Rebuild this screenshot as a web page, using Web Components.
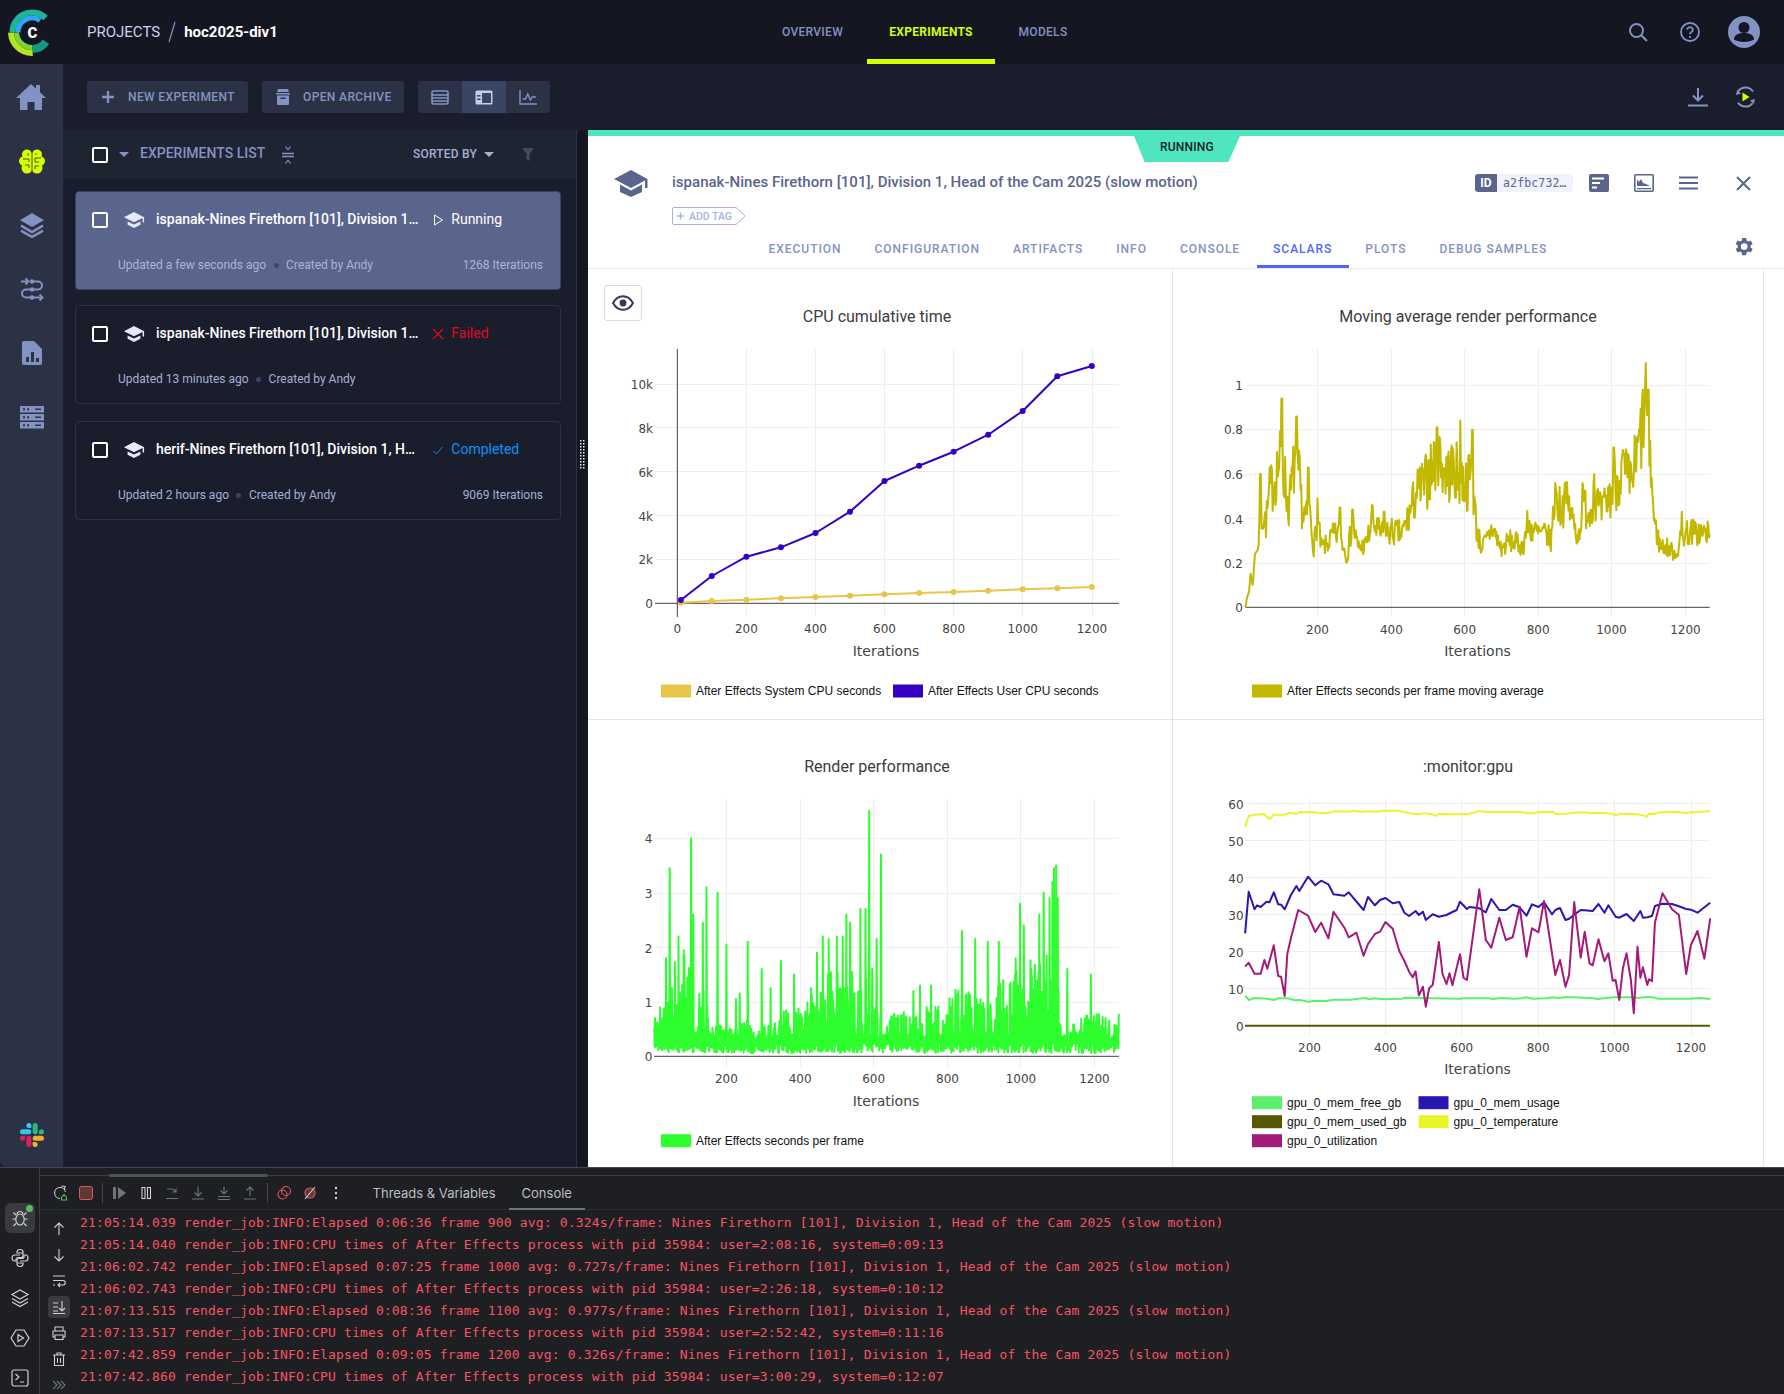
<!DOCTYPE html>
<html lang="en"><head><meta charset="utf-8"><title>Experiments</title>
<style>
html,body{margin:0;padding:0;background:#1e1f22;}
body{width:1784px;height:1394px;overflow:hidden;display:flex;flex-direction:column;font-family:Roboto,"Liberation Sans",sans-serif;}
</style></head><body>
<app-shell></app-shell>
<debug-console></debug-console>
<script>
const BLUE='#8492c2';
const def=(name,render)=>customElements.define(name,class extends HTMLElement{connectedCallback(){if(!this.shadowRoot){this.attachShadow({mode:'open'}).innerHTML=render(this);}}});
const svg=(w,h,vb,body,extra='')=>`<svg width="${w}" height="${h}" viewBox="${vb}" ${extra} style="display:block;flex:none">${body}</svg>`;
const capPath='M12 2.5 1 8.6l11 6 9.4-5.1V15H23V8.6zM5 13.7v3.9l7 3.9 7-3.9v-3.9l-7 3.8z';
const ICON={
 home:svg(30,26,'0 0 30 26',`<path fill="${BLUE}" d="M15 0 20 4.6V1h4v7.2l6 5.8h-4v12h-7.5v-8h-7v8H4V14H0z"/>`),
 brain:svg(26,25,'0 0 26 25',`<g fill="#d6ff00"><circle cx="8" cy="5.5" r="5"/><circle cx="18" cy="5.5" r="5"/><circle cx="4.5" cy="12" r="4.5"/><circle cx="21.5" cy="12" r="4.5"/><circle cx="8" cy="19" r="5.5"/><circle cx="18" cy="19" r="5.5"/><circle cx="13" cy="12" r="8"/></g><g fill="none" stroke="#39402a" stroke-width=".9"><path d="M13 2v21M4 10h6v3M22 9h-6v4h4M6 16h4v3M20 17h-4v3M9 4v3M17 4v2"/></g>`),
 layers:svg(24,25,'0 0 24 25',`<path fill="${BLUE}" d="M12 0 24 7.2 12 14 0 7.2z"/><path fill="none" stroke="${BLUE}" stroke-width="2.4" d="M1 12.6 12 19l11-6.4M1 17.6 12 24l11-6.4"/>`),
 pipeline:svg(24,25,'0 0 24 25',`<g fill="none" stroke="${BLUE}" stroke-width="1.9"><path d="M12 4.500h6a4 4 0 0 1 0 8H6a4 4 0 0 0 0 8h16.500"/><path d="M1 4.500h7M5.500 1.500l3 3-3 3M19.500 17.500l3 3-3 3"/></g><g fill="${BLUE}"><circle cx="12" cy="4.500" r="2.300"/><circle cx="12" cy="12.500" r="2.300"/><circle cx="12" cy="20.500" r="2.300"/></g>`),
 report:svg(20,24,'0 0 20 24',`<path fill="${BLUE}" d="M2 0h10l8 8v14a2 2 0 0 1-2 2H2a2 2 0 0 1-2-2V2a2 2 0 0 1 2-2z"/><path fill="#2c3246" d="M4 16h3v5H4zM9 11h3v10H9zM14 17h3v4h-3z"/>`),
 workers:svg(24,24,'0 0 24 24',`<path fill="${BLUE}" d="M0 1h24v6.500H0zM0 9h24v6.500H0zM0 17h24v6.500H0z"/><path fill="#2c3246" d="M3 3.300h2v2H3zM7 3.300h2v2H7zM15 3.500h6v1.600h-6zM3 11.300h2v2H3zM7 11.300h2v2H7zM15 11.500h6v1.600h-6zM3 19.300h2v2H3zM7 19.300h2v2H7zM15 19.500h6v1.600h-6z"/>`),
 slack:svg(24,24,'0 0 24 24',`<path fill="#E01E5A" d="M5.042 15.165a2.528 2.528 0 0 1-2.52 2.523A2.528 2.528 0 0 1 0 15.165a2.527 2.527 0 0 1 2.522-2.52h2.52v2.52zM6.313 15.165a2.527 2.527 0 0 1 2.521-2.52 2.527 2.527 0 0 1 2.521 2.52v6.313A2.528 2.528 0 0 1 8.834 24a2.528 2.528 0 0 1-2.521-2.522v-6.313z"/><path fill="#36C5F0" d="M8.834 5.042a2.528 2.528 0 0 1-2.521-2.52A2.528 2.528 0 0 1 8.834 0a2.528 2.528 0 0 1 2.521 2.522v2.52H8.834zM8.834 6.313a2.528 2.528 0 0 1 2.521 2.521 2.528 2.528 0 0 1-2.521 2.521H2.522A2.528 2.528 0 0 1 0 8.834a2.528 2.528 0 0 1 2.522-2.521h6.312z"/><path fill="#2EB67D" d="M18.956 8.834a2.528 2.528 0 0 1 2.522-2.521A2.528 2.528 0 0 1 24 8.834a2.528 2.528 0 0 1-2.522 2.521h-2.522V8.834zM17.688 8.834a2.528 2.528 0 0 1-2.523 2.521 2.527 2.527 0 0 1-2.52-2.521V2.522A2.527 2.527 0 0 1 15.165 0a2.528 2.528 0 0 1 2.523 2.522v6.312z"/><path fill="#ECB22E" d="M15.165 18.956a2.528 2.528 0 0 1 2.523 2.522A2.528 2.528 0 0 1 15.165 24a2.527 2.527 0 0 1-2.52-2.522v-2.522h2.52zM15.165 17.688a2.527 2.527 0 0 1-2.52-2.523 2.526 2.526 0 0 1 2.52-2.52h6.313A2.527 2.527 0 0 1 24 15.165a2.528 2.528 0 0 1-2.522 2.523h-6.313z"/>`),
 cap:(c,w=22,h=20)=>svg(w,h,'0 0 24 24',`<path fill="${c}" d="${capPath}"/>`,'preserveAspectRatio="none"'),
 caret:(c,w=10)=>svg(w,5,'0 0 10 5',`<path fill="${c}" d="M0 0h10L5 5z"/>`)
};
const pol=(cx,cy,r,a)=>[cx+r*Math.cos(a*Math.PI/180),cy+r*Math.sin(a*Math.PI/180)];
const arc=(r,a0,a1,col,w)=>{const [x0,y0]=pol(32,32,r,a0),[x1,y1]=pol(32,32,r,a1);return `<path fill="none" stroke="${col}" stroke-width="${w}" d="M${x0} ${y0}A${r} ${r} 0 ${Math.abs(a1-a0)>180?1:0} 1 ${x1} ${y1}"/>`;};

def('app-logo',()=>`<style>:host{display:block;width:63px;height:64px;flex:none}svg{display:block}text{font:900 15px Roboto,sans-serif;fill:#fff}</style>
<svg width="63" height="64" viewBox="0 0 63 64">${arc(19.5,178,314,'#1db598',6)}${arc(14,178,305,'#34a5f2',5)}${arc(21,88,178,'#b5e61d',6)}${arc(15.5,88,178,'#7fd33a',5)}${arc(17,35,88,'#139a82',8)}<text x="32.500" y="37.500" text-anchor="middle">C</text></svg>`);

def('top-bar',()=>`<style>
:host{display:flex;height:64px;background:#141722;align-items:stretch;flex:none}
.crumb{width:695px;box-sizing:border-box;padding-left:24px;display:flex;align-items:center;font-size:15px;color:#c9d2ef}
b{font-weight:700;color:#fff;font-size:15px}
svg.sl{margin:0 7px 0 7px}
nav{display:flex;width:334px}
a{display:flex;align-items:center;justify-content:center;box-sizing:border-box;height:64px;font-size:12px;font-weight:500;letter-spacing:.3px;color:${BLUE};border-bottom:5px solid transparent;padding-top:5px}
a.on{color:#d4ff00;font-weight:700;border-bottom-color:#d4ff00;width:128px}
.ic{margin-left:auto;display:flex;align-items:center;padding-right:24px}
</style><app-logo></app-logo>
<div class="crumb">PROJECTS<svg class="sl" width="10" height="24" viewBox="0 0 10 24"><path d="M8 2 2 22" stroke="#8492c2" stroke-width="1.200"/></svg><b>hoc2025-div1</b></div>
<nav><a style="width:109px">OVERVIEW</a><a class="on">EXPERIMENTS</a><a style="width:96px">MODELS</a></nav>
<div class="ic">
${svg(20,20,'0 0 20 20',`<circle cx="8.500" cy="8.500" r="6.500" fill="none" stroke="${BLUE}" stroke-width="2"/><path d="m13.500 13.500 5.500 5.500" stroke="${BLUE}" stroke-width="2.200"/>`,'style="margin-right:32px"')}
${svg(20,20,'0 0 20 20',`<circle cx="10" cy="10" r="9" fill="none" stroke="${BLUE}" stroke-width="1.800"/><path d="M7.200 7.700a2.800 2.600 0 1 1 4.300 2.300c-1 .7-1.500 1.100-1.500 2.300" fill="none" stroke="${BLUE}" stroke-width="1.800"/><circle cx="10" cy="15" r="1.100" fill="${BLUE}"/>`,'style="margin-right:28px"')}
${svg(32,32,'0 0 32 32',`<circle cx="16" cy="16" r="16" fill="${BLUE}"/><circle cx="16" cy="11.500" r="5.500" fill="#141722"/><path d="M6 23.500c0-5 5-6.500 10-6.500s10 1.500 10 6.500c-2.500 1.500-6 2.500-10 2.500s-7.500-1-10-2.500z" fill="#141722"/>`)}
</div>`);

def('side-nav',()=>`<style>
:host{display:flex;flex-direction:column;width:63px;flex:none;background:#2c3246;padding:1px 0 20px;box-sizing:border-box}
div{height:64px;display:flex;align-items:center;justify-content:center;flex:none}
div.s{margin-top:auto;height:24px}
</style>
<div style="padding-right:2px">${ICON.home}</div><div>${ICON.brain}</div><div>${ICON.layers}</div><div>${ICON.pipeline}</div><div>${ICON.report}</div><div>${ICON.workers}</div><div class="s">${ICON.slack}</div>`);

def('tool-bar',()=>`<style>
:host{display:flex;height:66px;flex:none;box-sizing:border-box;padding:17px 0 0 24px;background:#1a1e2c}
.b{display:flex;align-items:center;height:32px;background:#2c3246;border-radius:3px;margin-right:14px;color:${BLUE};font-size:12px;font-weight:500;letter-spacing:.38px;box-sizing:border-box;white-space:nowrap}
.t{display:flex;height:32px;border-radius:3px;overflow:hidden;background:#2c3246}
.t span{width:44px;display:flex;align-items:center;justify-content:center}
.t span.on{background:#3a4566}
.r{margin-left:auto;display:flex;height:32px;align-items:center;padding-right:28px}
</style>
<div class="b" style="width:161px;padding-left:15px">${svg(12,12,'0 0 12 12',`<path d="M6 0v12M0 6h12" stroke="${BLUE}" stroke-width="2.400"/>`,'style="margin-right:14px"')}NEW EXPERIMENT</div>
<div class="b" style="width:142px;padding-left:14px">${svg(14,16,'0 0 14 16',`<path fill="${BLUE}" d="M2 0h10l1 3H1zM0 4h14v1.500H0zM1 6.500h12V15a1 1 0 0 1-1 1H2a1 1 0 0 1-1-1z"/><path fill="#2c3246" d="M4.500 8.500h5v1.500h-5z"/>`,'style="margin-right:13px"')}OPEN ARCHIVE</div>
<div class="t">
<span>${svg(18,15,'0 0 18 15',`<rect x="1" y="1" width="16" height="13" rx="1.500" fill="none" stroke="${BLUE}" stroke-width="1.600"/><path d="M1 5h16M1 8h16M1 11h16" stroke="${BLUE}" stroke-width="1.400"/>`)}</span>
<span class="on">${svg(18,15,'0 0 18 15',`<rect x=".5" y=".5" width="17" height="14" rx="1.500" fill="#c4cdea"/><rect x="7" y="3" width="9" height="10" fill="#3a4566"/><path d="M2 5h3.500v1.500H2zM2 8.500h3.500V10H2z" fill="#3a4566"/>`)}</span>
<span>${svg(18,15,'0 0 18 15',`<path d="M1 0v14h17M3.500 9h3l2.300-5 2.500 6 1.800-3H17" fill="none" stroke="${BLUE}" stroke-width="1.400"/>`)}</span>
</div>
<div class="r">
${svg(20,20,'0 0 20 20',`<path d="M10 1v12M5 8.500l5 5 5-5M0 18.500h20" fill="none" stroke="${BLUE}" stroke-width="2"/>`,'style="margin-right:27px"')}
${svg(21,22,'0 0 21 22',`<path d="M18 5.500A9 9 0 0 0 3.500 4.700M3 16.500a9 9 0 0 0 14.500.800" fill="none" stroke="${BLUE}" stroke-width="2"/><path d="M2.200 3.800 1 9l5-1.500zM18.800 18 20 13l-5 1.500z" fill="${BLUE}"/><path d="M7.500 6.500v9l7-4.500z" fill="#d4ff00"/>`)}
</div>`);

def('check-box',()=>`<style>:host{display:block;width:16px;height:16px;box-sizing:border-box;border:2px solid #fff;border-radius:2px;flex:none}</style>`);

def('exp-card',h=>{
 const st=h.getAttribute('status');
 const ic={Running:svg(14,14,'0 0 14 14','<path d="M3.500 2v10L11.500 7z" fill="none" stroke="#fff" stroke-width="1"/>'),
  Failed:svg(14,14,'0 0 14 14','<path d="M2 2l10 10M12 2 2 12" stroke="#e00a1f" stroke-width="1.200"/>'),
  Completed:svg(14,14,'0 0 14 14','<path d="M2.500 8 5.500 11l6-7" fill="none" stroke="#0a84e8" stroke-width="1"/>')}[st];
 const col={Running:'#fff',Failed:'#e00a1f',Completed:'#0a91ff'}[st];
 return `<style>
:host{display:block;height:99px;box-sizing:border-box;border:1px solid #2c3246;border-radius:4px;padding:20px 17px 0 16px;color:#fff;flex:none}
:host([on]){background:#5a658e;border-color:#3a4261}
.r1{display:flex;align-items:center;height:16px}
.cap{margin-left:15px}
.t{margin-left:11px;width:266px;white-space:nowrap;font-size:14px;font-weight:500;color:#fff;transform:translateY(-1px)}
.s{margin-left:9px}
.st{margin-left:6.300px;font-size:14px;color:${col};transform:translateY(-1px)}
.r2{display:flex;align-items:center;margin:29px 0 0 26px;font-size:12px;color:#a4afd6;height:16px}
:host([on]) .r2{color:#aab4d8}
i{width:5px;height:5px;border-radius:50%;background:#3b4463;margin:0 7.500px}
.it{margin-left:auto;padding-right:0}
</style>
<div class="r1"><check-box></check-box><span class="cap">${ICON.cap('#e6e9f6')}</span><div class="t">${h.getAttribute('name')}</div><span class="s">${ic}</span><span class="st">${st}</span></div>
<div class="r2"><span>${h.getAttribute('updated')}</span><i></i><span>Created by Andy</span><span class="it">${h.getAttribute('iters')||''}</span></div>`;});

def('exp-list',()=>`<style>
:host{display:flex;flex-direction:column;width:514px;flex:none;background:#1a1e2c;box-sizing:border-box;border-right:1px solid #2c3246}
header{height:49px;display:flex;align-items:center;background:#1f2433;padding-left:29px;color:${BLUE};flex:none}
.c{margin-left:11px}
.h{margin-left:11px;font-size:14px;font-weight:500;width:125px;white-space:nowrap;transform:translateY(-2px)}
.ci{margin-left:16px}
.so{margin-left:118px;font-size:12px;font-weight:500;color:#a4afd6;letter-spacing:.2px;white-space:nowrap;transform:translateY(-1px)}
main{display:flex;flex-direction:column;gap:16px;padding:12px 15px 0 12px}
</style>
<header><check-box></check-box><span class="c">${ICON.caret(BLUE)}</span><span class="h">EXPERIMENTS LIST</span>
<span class="ci">${svg(14,20,'0 0 14 20',`<path d="M1 8.500h12M1 11.500h12" stroke="${BLUE}" stroke-width="1.400"/><path d="M7 5 4.500 1.500M7 5l2.500-3.500M7 15l-2.500 3.500M7 15l2.500 3.500" stroke="${BLUE}" stroke-width="1.200" fill="none"/>`)}</span>
<span class="so">SORTED BY</span><span style="margin-left:7px">${ICON.caret('#a4afd6')}</span>
<span style="margin-left:28px">${svg(12,13,'0 0 12 13','<path d="M0 0h12L7.500 6v7l-3-2V6z" fill="#434a63"/>')}</span></header>
<main>
<exp-card on name="ispanak-Nines Firethorn [101], Division 1…" status="Running" updated="Updated a few seconds ago" iters="1268 Iterations"></exp-card>
<exp-card style="margin-top:-1px" name="ispanak-Nines Firethorn [101], Division 1…" status="Failed" updated="Updated 13 minutes ago"></exp-card>
<exp-card style="margin-top:1px" name="herif-Nines Firethorn [101], Division 1, H…" status="Completed" updated="Updated 2 hours ago" iters="9069 Iterations"></exp-card>
</main>`);

def('pane-gutter',()=>`<style>:host{display:flex;width:11px;flex:none;background:#141722;align-items:center;justify-content:center;padding-bottom:0}</style>
${svg(6,30,'0 0 6 30',`<g fill="#e8eaf2">${[...Array(10)].map((_,i)=>`<rect x="0" y="${i*3}" width="1.500" height="1.500"/><rect x="3" y="${i*3}" width="1.500" height="1.500"/>`).join('')}</g>`,'style="margin-bottom:388px"')}`);

/* ---------- chart data ---------- */
function rng(a){return ()=>{a|=0;a=a+0x6D2B79F5|0;let t=Math.imul(a^a>>>15,1|a);t=t+Math.imul(t^t>>>7,61|t)^t;return((t^t>>>14)>>>0)/4294967296;};}
const lerp=(tb,x)=>{for(let i=1;i<tb.length;i++){if(x<=tb[i][0]){const [a,b]=tb[i-1],[c,d]=tb[i];return b+(d-b)*(x-a)/(c-a||1);}}return tb[tb.length-1][1];};
const zpts=(arr,ox,oy,sx)=>arr.map(([x,y])=>[+(ox+x/sx).toFixed(1),+(oy+y/3).toFixed(1)]);
const str=p=>p.map(a=>a.join(',')).join(' ');

const c1user=zpts([[250,810],[335,738],[430,680],[525,652],[620,609],[715,545],[810,453],[905,407],[1000,365],[1095,314],[1190,243],[1285,139],[1380,108]],590,330,2.75);
const c1sys=zpts([[250,818],[335,813],[430,809],[525,805],[620,801],[715,797],[810,793],[905,789],[1000,786],[1095,782],[1190,778],[1285,775],[1380,771]],590,330,2.75);

const envA=[[4,0],[8,.04],[14,.07],[18,.15],[24,.1],[30,.24],[38,.26],[44,.38],[50,.42],[60,.38],[70,.52],[80,.56],[90,.62],[100,.66],[110,.6],[120,.44],[128,.52],[138,.66],[150,.58],[160,.42],[170,.4],[178,.44],[190,.27],[200,.4],[210,.27],[225,.28],[240,.32],[260,.33],[280,.23],[295,.38],[310,.27],[330,.28],[350,.38],[370,.33],[400,.34],[430,.33],[450,.42],[470,.52],[490,.55],[510,.62],[525,.7],[550,.6],[570,.62],[590,.58],[605,.55],[620,.6],[632,.36],[645,.27],[660,.3],[675,.36],[700,.26],[720,.3],[740,.29],[758,.27],[770,.37],[800,.33],[820,.33],[835,.3],[845,.5],[860,.45],[880,.47],[900,.36],[910,.32],[920,.47],[940,.43],[950,.52],[970,.42],[990,.48],[1010,.56],[1030,.62],[1050,.55],[1060,.62],[1072,.7],[1085,.85],[1092,.95],[1100,.85],[1106,.62],[1115,.38],[1130,.28],[1150,.27],[1175,.24],[1190,.32],[1205,.34],[1266,.33]];
const peaksA={103:.94,143:.86,175:.63,200:.49,261:.45,295:.44,349:.46,381:.43,525:.81,588:.84,621:.8,846:.56,872:.56,952:.6,1005:.72,1092:1.1,1190:.43,45:.6};
const X2=i=>1317.5+(i-200)*.368,Y2=v=>607.3-222*v;
let rA=rng(7),ptsA=[];
for(let i=4;i<=1266;i+=2){let e=lerp(envA,i),amp=.04+.3*Math.max(0,e-.26),v=e+(rA()*2-1)*amp;if(i<40)v=e;v=Math.min(v,.98);
 for(const k in peaksA){if(Math.abs(k-i)<=1){v=peaksA[k];}}
 ptsA.push([+X2(i).toFixed(1),+Y2(v).toFixed(1)]);}

const ampB=[[4,.5],[30,.6],[60,1.5],[100,1.6],[115,.25],[130,1.1],[150,1.1],[160,.3],[200,.3],[260,.4],[280,.15],[330,.5],[400,.7],[450,1],[500,1.4],[600,1.4],[630,.15],[650,.6],[700,.5],[800,.8],[830,1],[900,.8],[1000,1.4],[1100,1.6],[1110,.2],[1180,.5],[1266,.6]];
const peaksB=[[103,4],[45,3.45],[145,3.1],[175,3],[110,2.6],[135,2.45],[35,1.8],[70,2.2],[83,1.95],[200,2.05],[258,2.1],[296,1.6],[348,1.75],[320,1.25],[383,1.5],[430,1.25],[445,1.9],[462,2.2],[478,2.15],[500,2.2],[515,2.2],[525,2.6],[535,2.45],[563,2.7],[578,2.7],[588,4.5],[620,3.7],[607,2.15],[708,1.2],[725,1.3],[755,1.3],[840,2.3],[875,2.15],[910,2.1],[940,2.1],[985,1.8],[998,2.8],[1008,2.4],[1050,2.6],[1062,3],[1078,2.9],[1085,3.2],[1090,3.45],[1095,3.5],[1100,2.9],[1125,1.6],[1190,1.5],[225,1.05],[235,1.15],[20,.9],[30,.87]];
const X3=i=>726.4+(i-200)*.3681,Y3=v=>1056.3-54.5*v;
let rB=rng(11),ptsB=[],pm=new Map(peaksB.map(([a,b])=>[Math.round(a/2)*2,b]));
for(let i=4;i<=1266;i+=1){let v;const pk=pm.get(i);
 if(pk)v=pk;else if(i%2==1)v=.06+rB()*.2;else{const a=lerp(ampB,i);v=rB()<.8?.25+rB()*a*1.05:.25+rB()*.2;}
 ptsB.push([+X3(i).toFixed(1),+Y3(v).toFixed(1)]);}

const gU=zpts([[179,560],[189,548],[205,581],[222,581],[232,540],[240,566],[258,496],[270,588],[278,590],[288,648],[295,522],[305,475],[325,390],[352,407],[372,456],[388,428],[408,475],[422,395],[452,443],[464,472],[485,458],[505,527],[517,492],[536,462],[550,455],[565,426],[585,446],[603,513],[617,543],[630,575],[640,592],[648,574],[657,646],[668,620],[676,680],[685,625],[695,615],[712,486],[722,582],[733,612],[741,580],[749,616],[770,523],[780,594],[789,600],[823,328],[841,480],[856,503],[878,413],[896,480],[915,472],[934,380],[953,530],[968,445],[986,457],[1001,363],[1032,585],[1045,540],[1060,620],[1070,585],[1084,366],[1102,533],[1113,455],[1126,550],[1135,556],[1151,478],[1167,544],[1178,520],[1190,602],[1198,600],[1208,660],[1218,565],[1228,520],[1240,600],[1248,700],[1258,500],[1266,593],[1273,562],[1285,615],[1290,598],[1298,604],[1306,428],[1327,340],[1353,388],[1372,405],[1392,582],[1405,495],[1423,453],[1442,536],[1458,415]],1180,780,2.75);
const gM=zpts([[179,460],[189,335],[205,388],[212,376],[222,381],[238,365],[246,367],[258,337],[270,373],[278,374],[288,388],[305,345],[320,318],[328,333],[352,290],[372,316],[388,302],[408,313],[422,343],[452,347],[464,337],[505,390],[517,351],[536,376],[550,360],[565,354],[585,370],[603,366],[617,398],[630,408],[648,393],[657,405],[668,395],[676,420],[695,403],[712,410],[733,405],[749,396],[761,390],[770,365],[789,387],[796,381],[823,385],[841,397],[856,357],[878,390],[896,390],[915,374],[934,382],[953,407],[968,373],[986,381],[1001,367],[1023,403],[1032,390],[1045,384],[1060,420],[1070,416],[1084,404],[1102,390],[1113,391],[1135,393],[1151,372],[1167,398],[1178,376],[1198,410],[1208,413],[1228,402],[1248,423],[1266,393],[1273,413],[1285,412],[1298,408],[1306,378],[1327,371],[1353,372],[1372,379],[1392,387],[1405,389],[1423,398],[1458,368]],1180,780,2.75);
const gT=zpts([[179,142],[189,108],[205,104],[232,102],[240,113],[248,116],[258,104],[290,104],[300,98],[320,101],[330,96],[370,97],[388,100],[408,98],[425,94],[462,95],[480,92],[500,96],[520,94],[540,95],[565,92],[600,92],[640,101],[660,103],[670,100],[695,103],[703,108],[712,102],[770,103],[790,103],[823,93],[840,96],[940,96],[955,100],[975,100],[985,96],[1025,96],[1035,102],[1060,101],[1085,98],[1110,97],[1130,100],[1150,98],[1190,101],[1200,106],[1210,101],[1250,102],[1275,106],[1282,110],[1290,101],[1305,102],[1320,97],[1370,96],[1390,99],[1405,97],[1458,94]],1180,780,2.75);
const gF=zpts([[179,647],[190,660],[205,654],[240,656],[258,660],[270,655],[296,655],[316,661],[330,660],[352,665],[372,662],[400,663],[425,659],[470,659],[490,656],[510,654],[520,658],[535,655],[560,658],[610,656],[617,653],[770,656],[780,655],[850,655],[860,657],[880,654],[920,656],[940,655],[952,652],[970,656],[1010,655],[1025,652],[1040,655],[1060,651],[1130,654],[1150,657],[1170,654],[1195,652],[1250,652],[1258,654],[1285,651],[1300,652],[1315,656],[1400,656],[1430,654],[1458,657]],1180,780,2.75);

const CH={
 cpu:{x0:588,y0:269,w:584,h:450,title:'CPU cumulative time',tx:877,ty:316,l:655,r:1119,t:349,b:617,
  xt:[['0',677.3],['200',746.4],['400',815.5],['600',884.5],['800',953.6],['1000',1022.7],['1200',1092]],
  yt:[['0',603.3],['2k',559.3],['4k',515.5],['6k',471.5],['8k',427.8],['10k',384.3]],lab:653,tickY:628,itX:886,itY:651,zero:603.3,vaxis:677.3,
  series:[{c:'#e8c54b',p:c1sys,m:1},{c:'#3300c4',p:c1user,m:1}],
  leg:[[661,691,'#e8c54b','After Effects System CPU seconds'],[893,691,'#3300c4','After Effects User CPU seconds']]},
 avg:{x0:1173,y0:269,w:590,h:450,title:'Moving average render performance',tx:1468,ty:316,l:1245.4,r:1709.6,t:349,b:617,
  xt:[['200',1317.5],['400',1391.4],['600',1464.6],['800',1538.2],['1000',1611.4],['1200',1685.4]],
  yt:[['0',607.3],['0.2',563.3],['0.4',518.7],['0.6',474.3],['0.8',429.3],['1',385.3]],lab:1243,tickY:628.7,itX:1477.5,itY:651,zero:607.3,
  series:[{c:'#c2b800',p:ptsA}],leg:[[1252,691,'#c2b800','After Effects seconds per frame moving average']]},
 rend:{x0:588,y0:720,w:584,h:446,title:'Render performance',tx:877,ty:766,l:654,r:1119,t:799,b:1067,
  xt:[['200',726.4],['400',800.2],['600',873.6],['800',947.5],['1000',1020.9],['1200',1094.4]],
  yt:[['0',1056.3],['1',1002.3],['2',947.7],['3',893.3],['4',838.3]],lab:652.5,tickY:1078,itX:886,itY:1101,zero:1056.3,
  series:[{c:'#2efd2e',p:ptsB}],leg:[[661,1140.7,'#2efd2e','After Effects seconds per frame']]},
 gpu:{x0:1173,y0:720,w:590,h:446,title:':monitor:gpu',tx:1468,ty:766,l:1245,r:1710,t:799,b:1035,
  xt:[['200',1309.5],['400',1385.5],['600',1461.8],['800',1538.2],['1000',1614.5],['1200',1691]],
  yt:[['0',1025.7],['10',988.7],['20',951.7],['30',914.7],['40',877.7],['50',840.7],['60',803.7]],lab:1243.6,tickY:1046.7,itX:1477.5,itY:1069,
  series:[{c:'#5cf06c',p:gF},{c:'#585800',p:[[1245,1025.7],[1710,1025.7]]},{c:'#2a17ad',p:gM},{c:'#e9f52b',p:gT},{c:'#a31b78',p:gU}],
  leg:[[1252,1102.7,'#5cf06c','gpu_0_mem_free_gb'],[1418.5,1102.7,'#2a17ad','gpu_0_mem_usage'],[1252,1121.7,'#585800','gpu_0_mem_used_gb'],[1418.5,1121.7,'#e9f52b','gpu_0_temperature'],[1252,1140.7,'#a31b78','gpu_0_utilization']]}
};

def('plot-chart',h=>{const c=CH[h.getAttribute('chart')];
 const grid=c.xt.map(([,x])=>`<path d="M${x} ${c.t}V${c.b}"/>`).join('')+c.yt.map(([,y])=>`<path d="M${c.l} ${y}H${c.r}"/>`).join('');
 return `<style>:host{display:block;box-sizing:border-box;border-right:1px solid #e0e3ef;border-bottom:1px solid #e0e3ef;background:#fff}
 svg{display:block}
 .ti{font:16px Roboto,sans-serif;fill:#3c3c3c;text-anchor:middle}
 .tk{font:12px "DejaVu Sans",sans-serif;fill:#444}
 .ax{font:14px "DejaVu Sans",sans-serif;fill:#444;text-anchor:middle}
 .lg{font:12px "Liberation Sans",sans-serif;fill:#111}
 </style>
 <svg width="${c.w}" height="${c.h}" viewBox="${c.x0} ${c.y0} ${c.w} ${c.h}">
 <text class="ti" x="${c.tx}" y="${c.ty}" dominant-baseline="central">${c.title}</text>
 <g stroke="#eeeeee" stroke-width="1" fill="none" shape-rendering="crispEdges">${grid}</g>
 ${c.zero?`<path d="M${c.l} ${c.zero}H${c.r}" stroke="#444" fill="none"/>`:''}
 ${c.vaxis?`<path d="M${c.vaxis} ${c.t}V${c.b}" stroke="#444" fill="none"/>`:''}
 ${c.series.map(s=>`<polyline points="${str(s.p)}" fill="none" stroke="${s.c}" stroke-width="2" stroke-linejoin="round"/>${s.m?s.p.map(([x,y])=>`<circle cx="${x}" cy="${y}" r="3" fill="${s.c}"/>`).join(''):''}`).join('')}
 ${c.yt.map(([t,y])=>`<text class="tk" x="${c.lab}" y="${y+1}" text-anchor="end" dominant-baseline="central">${t}</text>`).join('')}
 ${c.xt.map(([t,x])=>`<text class="tk" x="${x}" y="${c.tickY+1}" text-anchor="middle" dominant-baseline="central">${t}</text>`).join('')}
 <text class="ax" x="${c.itX}" y="${c.itY}" dominant-baseline="central">Iterations</text>
 ${c.leg.map(([x,y,col,t])=>`<rect x="${x}" y="${y-6.500}" width="30" height="13" fill="${col}"/><text class="lg" x="${x+35}" y="${y}" dominant-baseline="central">${t}</text>`).join('')}
 </svg>`;});

def('scalar-grid',()=>`<style>
:host{display:block;position:relative;flex:1;background:#fff;overflow:hidden}
.g{display:grid;grid-template-columns:585px 591px;grid-template-rows:451px 446px}
.eye{position:absolute;left:16px;top:16px;width:38px;height:36px;box-sizing:border-box;background:#fff;border:1px solid #d8dcea;border-radius:3px;display:flex;align-items:center;justify-content:center}
</style>
<div class="g"><plot-chart chart="cpu"></plot-chart><plot-chart chart="avg"></plot-chart><plot-chart chart="rend" style="border-bottom:0"></plot-chart><plot-chart chart="gpu" style="border-bottom:0"></plot-chart></div>
<div class="eye">${svg(22,16,'0 0 22 16','<path d="M1 8c2.500-4.500 6-6.800 10-6.800S18.500 3.500 21 8c-2.500 4.500-6 6.800-10 6.800S3.500 12.500 1 8z" fill="none" stroke="#33394f" stroke-width="2"/><circle cx="11" cy="8" r="3.400" fill="#33394f"/>')}</div>`);

def('detail-pane',()=>{
 const tabs=['EXECUTION','CONFIGURATION','ARTIFACTS','INFO','CONSOLE','SCALARS','PLOTS','DEBUG SAMPLES'];
 return `<style>
:host{display:flex;flex-direction:column;flex:1;min-width:0;background:#fff;border-top:6px solid #4fe5c0;position:relative}
.run{position:absolute;left:546px;top:0;width:106px;height:26px;box-sizing:border-box;padding-bottom:5px;background:#4fe5c0;clip-path:polygon(0 0,100% 0,89% 100%,10% 100%);display:flex;align-items:center;justify-content:center;font-size:12px;font-weight:500;color:#1a1e2c;letter-spacing:.2px;z-index:1}
header{height:133px;box-sizing:border-box;border-bottom:1px solid #e8eaf0;display:flex;flex-direction:column;flex:none}
.r1{display:flex;align-items:center;height:28px;margin-top:33px;padding-right:18px;flex:none}
.hat{margin:0 24px 0 26px}
h1{font-size:15px;font-weight:500;color:#5a658e;margin:0;flex:1;white-space:nowrap;transform:translateY(-1px);letter-spacing:.02px}
.id{display:flex;width:98px;height:18px;border-radius:3px;overflow:hidden;background:#f0f3fb;margin-right:3px;font:12px "DejaVu Sans Mono",monospace;color:#5a658e;align-items:center}
.id b{width:22px;height:18px;background:#5a658e;color:#fff;font:700 12px Roboto,sans-serif;display:flex;align-items:center;justify-content:center;margin-right:6px}
.idt{letter-spacing:.15px;font-size:11.500px;white-space:nowrap}
.ib{width:45px;display:flex;justify-content:center}
.x{margin-left:10px}
.r2{margin:10px 0 0 84px;height:18px;flex:none}
.tabs{display:flex;margin-top:6px;padding-left:164px;height:37px;position:relative;flex:none}
.tabs span{box-sizing:border-box;height:37px;padding:2px 16.500px 0;display:flex;align-items:center;font-size:12px;font-weight:500;letter-spacing:.97px;color:${BLUE};border-bottom:3px solid transparent;white-space:nowrap}
.tabs span.on{color:#4d66ff;border-bottom-color:#4d66ff}
.tabs span.gear{position:absolute;right:29px;top:-3px;padding:0;border:0}
svg text{font:500 10.500px Roboto,sans-serif;fill:#a8b3dc}
</style>
<div class="run">RUNNING</div>
<header>
<div class="r1"><span class="hat">${svg(34,27,'0 0 34 27',`<path fill="#5a658e" d="M17 0 0 9l17 9 14-7.400V18h2.500V9zM6 14.500V22l11 5 11-5v-7.500l-11 6z"/>`)}</span>
<h1>ispanak-Nines Firethorn [101], Division 1, Head of the Cam 2025 (slow motion)</h1>
<div class="id"><b>ID</b><span class="idt">a2fbc732…</span></div>
<span class="ib">${svg(20,18,'0 0 20 18','<rect width="20" height="18" rx="2" fill="#5a658e"/><path d="M3 3.500h12v2H3zM3 8h8v2H3zM3 12.500h5v2H3z" fill="#fff"/>')}</span>
<span class="ib">${svg(20,18,'0 0 20 18','<rect x=".8" y=".8" width="18.400" height="16.400" rx="1" fill="none" stroke="#5a658e" stroke-width="1.600"/><path d="M3 12V5l2 3 2-3 2 4 3 1 2 1 2 1z M3 14h14v1.200H3z" fill="#5a658e"/>')}</span>
<span class="ib">${svg(19,14,'0 0 19 14','<path d="M0 1.500h19M0 7h19M0 12.500h19" stroke="#5a658e" stroke-width="2"/>')}</span>
<span class="ib x">${svg(15,15,'0 0 15 15','<path d="M1 1l13 13M14 1 1 14" stroke="#5a658e" stroke-width="2"/>')}</span></div>
<div class="r2"><svg width="76" height="18" viewBox="0 0 76 18"><path d="M2 .5h62l9 8.500-9 8.500H2A1.500 1.500 0 0 1 .5 16V2A1.500 1.500 0 0 1 2 .5z" fill="none" stroke="#a8b3dc"/><path d="M5 9h7M8.500 5.500v7" stroke="#a8b3dc" stroke-width="1.400"/><text x="17" y="12.500">ADD TAG</text></svg></div>
<div class="tabs">${tabs.map(t=>`<span class="${t=='SCALARS'?'on':''}">${t}</span>`).join('')}
<span class="gear">${svg(23,23,'0 0 24 24','<path fill="#5a658e" d="M19.400 13a7.600 7.600 0 0 0 0-2l2.200-1.700-2.100-3.600-2.600 1a7.500 7.500 0 0 0-1.700-1L14.800 3h-4.200l-.4 2.700a7.500 7.500 0 0 0-1.700 1l-2.600-1-2.100 3.600L6 11a7.600 7.600 0 0 0 0 2l-2.200 1.700 2.100 3.600 2.600-1a7.500 7.500 0 0 0 1.700 1l.4 2.700h4.200l.4-2.700a7.500 7.500 0 0 0 1.700-1l2.600 1 2.100-3.600zM12.700 15.500a3.500 3.500 0 1 1 0-7 3.500 3.500 0 0 1 0 7z"/>')}</span></div>
</header>
<scalar-grid></scalar-grid>`;});

def('app-shell',()=>`<style>
:host{display:flex;flex-direction:column;height:1167px;flex:none;overflow:hidden;border-radius:0 0 0 7px;background:#1a1e2c}
.b{display:flex;flex:1;min-height:0}
.c{display:flex;flex-direction:column;flex:1;min-width:0}
.m{display:flex;flex:1;min-height:0}
</style>
<top-bar></top-bar>
<div class="b"><side-nav></side-nav><div class="c"><tool-bar></tool-bar><div class="m"><exp-list></exp-list><pane-gutter></pane-gutter><detail-pane></detail-pane></div></div></div>`);

const G='#ced0d6',D='#6f737a',R='#db5c5c';
const ds=(body,s=G,w=1.1)=>svg(16,16,'0 0 16 16',`<g fill="none" stroke="${s}" stroke-width="${w}">${body}</g>`);
const ds20=(body,s=G)=>svg(20,20,'0 0 20 20',`<g fill="none" stroke="${s}" stroke-width="1.200">${body}</g>`);
def('debug-console',()=>{
 const lines=[
 '21:05:14.039 render_job:INFO:Elapsed 0:06:36 frame 900 avg: 0.324s/frame: Nines Firethorn [101], Division 1, Head of the Cam 2025 (slow motion)',
 '21:05:14.040 render_job:INFO:CPU times of After Effects process with pid 35984: user=2:08:16, system=0:09:13',
 '21:06:02.742 render_job:INFO:Elapsed 0:07:25 frame 1000 avg: 0.727s/frame: Nines Firethorn [101], Division 1, Head of the Cam 2025 (slow motion)',
 '21:06:02.743 render_job:INFO:CPU times of After Effects process with pid 35984: user=2:26:18, system=0:10:12',
 '21:07:13.515 render_job:INFO:Elapsed 0:08:36 frame 1100 avg: 0.977s/frame: Nines Firethorn [101], Division 1, Head of the Cam 2025 (slow motion)',
 '21:07:13.517 render_job:INFO:CPU times of After Effects process with pid 35984: user=2:52:42, system=0:11:16',
 '21:07:42.859 render_job:INFO:Elapsed 0:09:05 frame 1200 avg: 0.326s/frame: Nines Firethorn [101], Division 1, Head of the Cam 2025 (slow motion)',
 '21:07:42.860 render_job:INFO:CPU times of After Effects process with pid 35984: user=3:00:29, system=0:12:07'];
 return `<style>
:host{display:flex;flex:1;background:#1e1f22;color:#bcbec4;font-family:Inter,sans-serif;border-top:1px solid #43454a;min-height:0;box-sizing:border-box}
.s{width:40px;flex:none;border-right:1px solid #393b40;display:flex;flex-direction:column;align-items:center;padding-top:35px;box-sizing:border-box}
.s>span{height:40px;width:30px;display:flex;align-items:center;justify-content:center;flex:none}
.s>span.on{background:#393b40;border-radius:6px;height:30px;margin-bottom:5px;position:relative}
.s>span.on:after{content:"";position:absolute;right:2px;top:2px;width:7px;height:7px;border-radius:50%;background:#5fb865}
.m{flex:1;min-width:0;display:flex;flex-direction:column}
.tb{height:42px;flex:none;box-sizing:border-box;border-bottom:1px solid #2b2d30;position:relative;display:flex;align-items:center;padding-left:7px;margin-top:0}
.tb:before{content:"";position:absolute;left:0;right:0;top:7px;height:1px;background:#393b40}
.tb:after{content:"";position:absolute;left:69px;width:159px;top:6px;height:3px;border-radius:2px;background:#4e5157}
.tb .i{width:26.200px;display:flex;justify-content:center;flex:none;margin-top:8px}
.tb .sep{width:1px;height:20px;background:#43454a;flex:none;margin:8px 0 0;}
.t{font-size:13px;white-space:nowrap;margin-top:8px;flex:none}
.t2{position:relative;align-self:stretch;display:flex;align-items:center;padding:8px 13px 0;margin:0 0 0 13px}
.t2:after{content:"";position:absolute;left:0;right:0;bottom:-1px;height:2px;background:#6f737a}
.l{flex:1;display:flex;min-height:0}
.gu{width:38px;flex:none;display:flex;flex-direction:column;align-items:center;padding-top:6px;box-sizing:border-box;background:#1f2023;}
.gu span{height:26px;width:22px;flex:none;display:flex;align-items:center;justify-content:center}
.gu span.on{background:#393b40;border-radius:4px;height:22px;margin:2px 0}
pre{margin:0;padding:2px 0 0 2px;font:13px/22px "DejaVu Sans Mono","Liberation Mono",monospace;letter-spacing:.17px;color:#f75464;white-space:pre;overflow:hidden;flex:1}
</style>
<div class="s">
<span class="on">${ds20('<ellipse cx="10" cy="11.500" rx="4.200" ry="5.500"/><path d="M7 6.500a3 3 0 0 1 6 0M5.800 11H2.500M17.500 11h-3.300M6 7 3.500 4.500M14 7l2.500-2.500M6 15.500 3.500 18M14 15.500l2.500 2.500"/>')}</span>
<span>${ds20('<path d="M12.500 5H7V4c0-1.500 1.200-2.500 3-2.500S13 2.500 13 4v3.500c0 1.200-.8 2-2 2H8c-1.200 0-2 .8-2 2V13H4.500C3 13 2 11.800 2 10s1-3 2.500-3H10"/><path d="M7.500 15H13v1c0 1.500-1.200 2.500-3 2.500S7 17.500 7 16v-3.500c0-1.200.8-2 2-2h3c1.200 0 2-.8 2-2V7h1.500C17 7 18 8.200 18 10s-1 3-2.500 3H10"/>')}</span>
<span>${ds20('<path d="M10 2 2 6.500l8 4.500 8-4.500zM2 10.500 10 15l8-4.500M2 14l8 4.500 8-4.500"/>')}</span>
<span>${ds20('<path d="M6 2h8l5 8-5 8H6l-5-8z"/><path d="M8 6.500v7l5.500-3.500z"/>')}</span>
<span>${ds20('<rect x="2" y="2" width="16" height="16" rx="2"/><path d="m5.500 6 3.500 3-3.500 3M10 14h4"/>')}</span>
</div>
<div class="m">
<div class="tb">
<span class="i">${ds('<path d="M13.500 7A5.500 5.500 0 1 0 8 13.500M9.500 1 13 1.500 12.500 5"/><path d="M9.500 15v-2.500l2.500-3 2.500 3V15z" stroke="#5fb865"/>')}</span>
<span class="i">${svg(14,14,'0 0 14 14',`<rect x=".5" y=".5" width="13" height="13" rx="2" fill="#5e3838" stroke="${R}"/>`)}</span>
<span class="sep" style="margin-left:3px"></span>
<span class="i" style="margin-left:3px">${svg(16,16,'0 0 16 16',`<path d="M2 2h3v12H2zM7 2l8 6-8 6z" fill="${D}"/>`)}</span>
<span class="i">${ds('<rect x="4" y="2.500" width="3" height="11"/><rect x="9.500" y="2.500" width="3" height="11"/>')}</span>
<span class="i">${ds('<path d="M2 13.500h12M3 4h6l3 3M12 3.500V7H8.500"/>',D)}</span>
<span class="i">${ds('<path d="M2 14h12M8 1.500v9M4.500 7.500 8 11l3.500-3.500"/>',D)}</span>
<span class="i">${ds('<path d="M2 11.500h12M2 14.500h12M8 1.500v7M4.500 5.500 8 9l3.500-3.500"/>',D)}</span>
<span class="i">${ds('<path d="M2 14h12M8 11V2M4.500 5.500 8 2l3.500 3.500"/>',D)}</span>
<span class="sep" style="margin-left:3px"></span>
<span class="i" style="margin-left:3px">${ds('<circle cx="6.500" cy="9.500" r="4.500"/><circle cx="10" cy="6" r="4.500"/>',R)}</span>
<span class="i">${ds('<circle cx="8" cy="8" r="5" fill="#5e3838"/><path d="M13 2 3 14" stroke="#ced0d6"/>',R)}</span>
<span class="i">${svg(4,14,'0 0 4 14',`<circle cx="2" cy="2" r="1.200" fill="${G}"/><circle cx="2" cy="7" r="1.200" fill="${G}"/><circle cx="2" cy="12" r="1.200" fill="${G}"/>`)}</span>
<span class="t" style="margin-left:23.500px">Threads &amp; Variables</span>
<span class="t t2">Console</span>
</div>
<div class="l">
<div class="gu">
<span>${ds('<path d="M8 14V2M3.500 6.500 8 2l4.500 4.500"/>')}</span>
<span>${ds('<path d="M8 2v12M3.500 9.500 8 14l4.500-4.500"/>')}</span>
<span>${ds('<path d="M2 3h12M2 7.500h10a2 2 0 0 1 0 4.500H7M9 10l-2 2 2 2M2 12h2"/>')}</span>
<span class="on">${ds('<path d="M2 4h5M2 8h5M2 12h5M2 14.500h12M11 2v10M8 9l3 3 3-3"/>')}</span>
<span>${ds('<path d="M4 6V2h8v4M4 12H2V6h12v6h-2M4 10h8v4.500H4z"/>')}</span>
<span>${ds('<path d="M2 4h12M6 4V2h4v2M3.500 4v10.500h9V4M6.500 7v5M9.500 7v5"/>')}</span>
<span>${ds('<path d="m2 4 4 4-4 4M6 4l4 4-4 4M10 4l4 4-4 4"/>',D)}</span>
</div>
<pre>${lines.join('\n')}</pre>
</div></div>`;});
</script>
</body></html>
